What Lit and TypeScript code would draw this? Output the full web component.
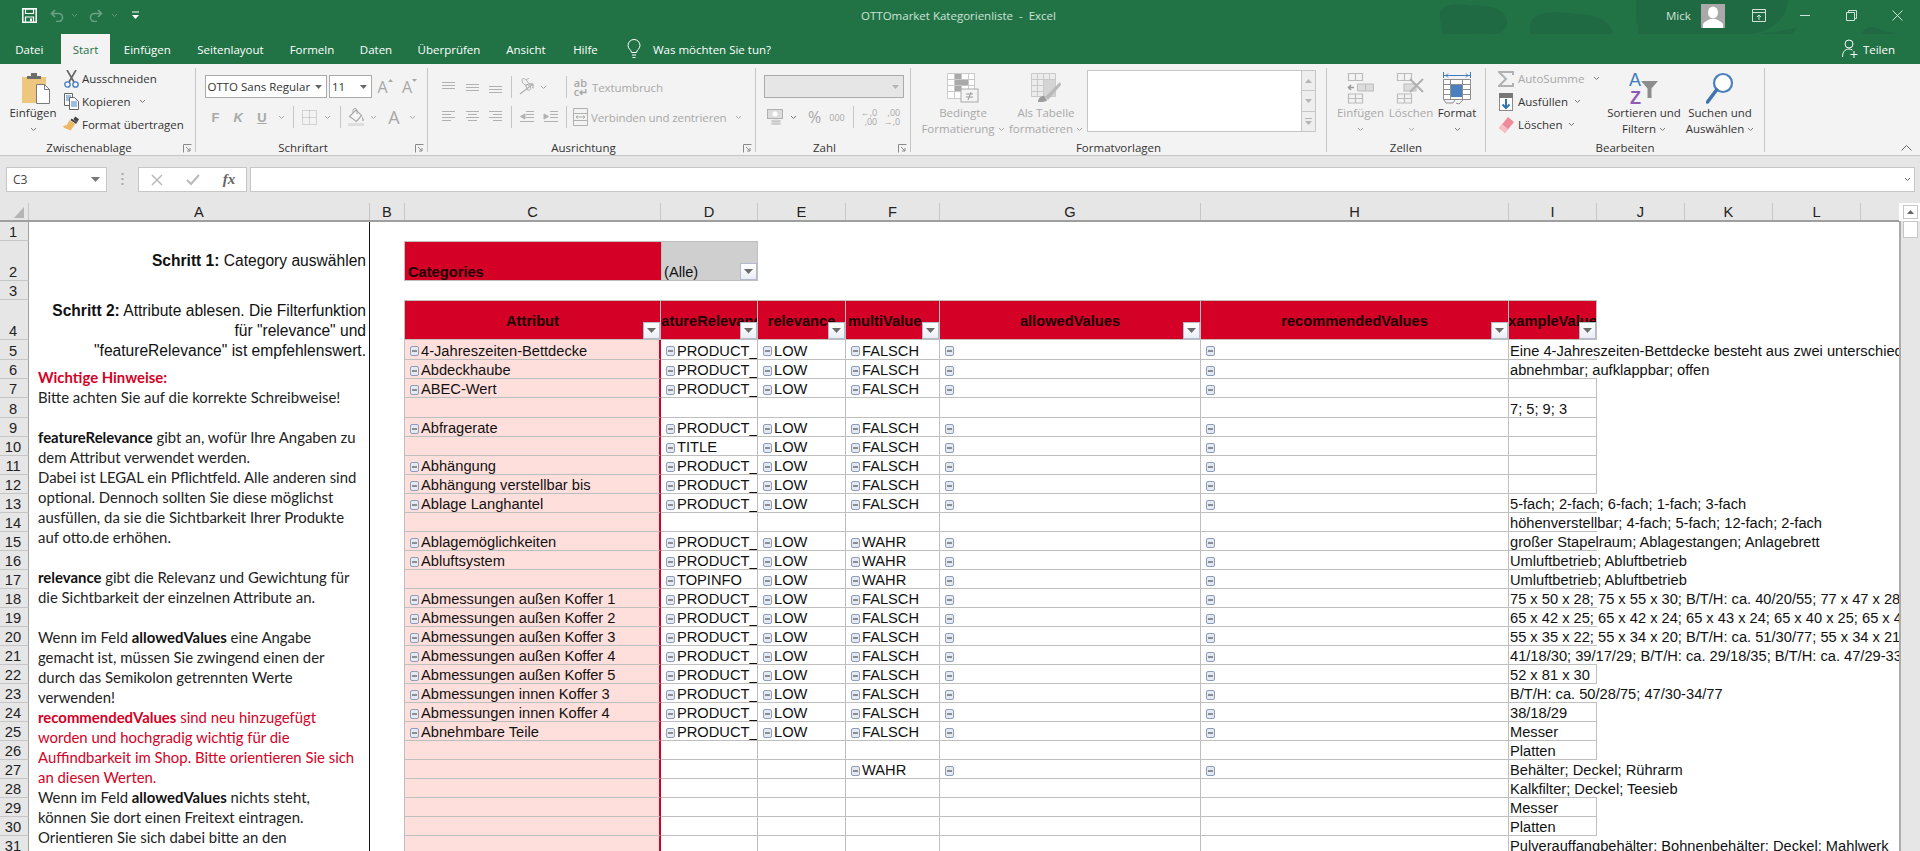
import { LitElement, html, css } from "lit";
import { customElement } from "lit/decorators.js";

interface Row { h: number; a?: string; d?: string; e?: string; f?: string; g?: boolean; i?: string; over?: boolean; }
const P = "PRODUCT_";
const L = "LOW";
const FA = "FALSCH";
const W = "WAHR";
const rows: Row[] = [
  { h: 20, a: "4-Jahreszeiten-Bettdecke", d: P, e: L, f: FA, g: true, i: "Eine 4-Jahreszeiten-Bettdecke besteht aus zwei unterschiedlichen Decken", over: true },
  { h: 19, a: "Abdeckhaube", d: P, e: L, f: FA, g: true, i: "abnehmbar; aufklappbar; offen", over: true },
  { h: 19, a: "ABEC-Wert", d: P, e: L, f: FA, g: true },
  { h: 20, i: "7; 5; 9; 3" },
  { h: 19, a: "Abfragerate", d: P, e: L, f: FA, g: true },
  { h: 19, d: "TITLE", e: L, f: FA, g: true },
  { h: 19, a: "Abhängung", d: P, e: L, f: FA, g: true },
  { h: 19, a: "Abhängung verstellbar bis", d: P, e: L, f: FA, g: true },
  { h: 19, a: "Ablage Langhantel", d: P, e: L, f: FA, g: true, i: "5-fach; 2-fach; 6-fach; 1-fach; 3-fach", over: true },
  { h: 19, i: "höhenverstellbar; 4-fach; 5-fach; 12-fach; 2-fach", over: true },
  { h: 19, a: "Ablagemöglichkeiten", d: P, e: L, f: W, g: true, i: "großer Stapelraum; Ablagestangen; Anlagebrett", over: true },
  { h: 19, a: "Abluftsystem", d: P, e: L, f: W, g: true, i: "Umluftbetrieb; Abluftbetrieb", over: true },
  { h: 19, d: "TOPINFO", e: L, f: W, g: true, i: "Umluftbetrieb; Abluftbetrieb", over: true },
  { h: 19, a: "Abmessungen außen Koffer 1", d: P, e: L, f: FA, g: true, i: "75 x 50 x 28; 75 x 55 x 30; B/T/H: ca. 40/20/55; 77 x 47 x 28", over: true },
  { h: 19, a: "Abmessungen außen Koffer 2", d: P, e: L, f: FA, g: true, i: "65 x 42 x 25; 65 x 42 x 24; 65 x 43 x 24; 65 x 40 x 25; 65 x 41 x 25", over: true },
  { h: 19, a: "Abmessungen außen Koffer 3", d: P, e: L, f: FA, g: true, i: "55 x 35 x 22; 55 x 34 x 20; B/T/H: ca. 51/30/77; 55 x 34 x 21", over: true },
  { h: 19, a: "Abmessungen außen Koffer 4", d: P, e: L, f: FA, g: true, i: "41/18/30; 39/17/29; B/T/H: ca. 29/18/35; B/T/H: ca. 47/29-33/30", over: true },
  { h: 19, a: "Abmessungen außen Koffer 5", d: P, e: L, f: FA, g: true, i: "52 x 81 x 30" },
  { h: 19, a: "Abmessungen innen Koffer 3", d: P, e: L, f: FA, g: true, i: "B/T/H: ca. 50/28/75; 47/30-34/77", over: true },
  { h: 19, a: "Abmessungen innen Koffer 4", d: P, e: L, f: FA, g: true, i: "38/18/29" },
  { h: 19, a: "Abnehmbare Teile", d: P, e: L, f: FA, g: true, i: "Messer" },
  { h: 19, i: "Platten" },
  { h: 19, f: W, g: true, i: "Behälter; Deckel; Rührarm", over: true },
  { h: 19, i: "Kalkfilter; Deckel; Teesieb", over: true },
  { h: 19, i: "Messer" },
  { h: 19, i: "Platten" },
  { h: 19, i: "Pulverauffangbehälter; Bohnenbehälter; Deckel; Mahlwerk", over: true },
];
const topHeights = [19, 40, 19, 40];
const allHeights = [...topHeights, ...rows.map((r) => r.h)];
const colHeads: [string, string][] = [
  ["A", "c-a"], ["B", "c-b"], ["C", "c-cc"], ["D", "c-d"], ["E", "c-e"], ["F", "c-f"],
  ["G", "c-g"], ["H", "c-h"], ["I", "c-i"], ["J", "c-j"], ["K", "c-j"], ["L", "c-j"], ["", "c-m"],
];
const tabNames = ["Datei", "Start", "Einfügen", "Seitenlayout", "Formeln", "Daten", "Überprüfen", "Ansicht", "Hilfe"];

const chev = (c = "#777") => html`<svg class="chev" width="7" height="5" viewBox="0 0 7 5"><path d="M1 1l2.500 2.500L6 1" fill="none" stroke=${c} stroke-width="1"/></svg>`;
const launcher = html`<svg class="launch" width="9" height="9" viewBox="0 0 9 9"><path d="M.5 8.500V.5h8M3 3l4 4M4 7h3V4" fill="none" stroke="#8a8a8a"/></svg>`;
const minus = html`<svg class="mn" width="9" height="10" viewBox="0 0 9 10"><rect x=".5" y=".5" width="8" height="9" rx="1.500" fill="#e4e9f2" stroke="#8d9cb8"/><path d="M2 5h5" stroke="#333" stroke-width="1"/></svg>`;
const filt = html`<span class="filt"><svg width="9" height="5" viewBox="0 0 9 5"><path d="M0 0h9L4.500 5z" fill="#6b6b6b"/></svg></span>`;

const ico = {
  save: html`<svg width="15" height="15" viewBox="0 0 15 15"><path d="M.8.8h13.400v13.400H.8z" fill="none" stroke="#fff" stroke-width="1.500"/><path d="M3.500 1h8v4.500h-8zM3.500 14V9h8v5" fill="none" stroke="#fff" stroke-width="1.200"/><rect x="8" y="10.500" width="2" height="3" fill="#fff"/></svg>`,
  undo: html`<svg width="14" height="13" viewBox="0 0 14 13"><path d="M5 1L1.500 4.500 5 8M2 4.500h6.500a4 4 0 0 1 0 8H6" fill="none" stroke="#6ba284" stroke-width="1.600"/></svg>`,
  redo: html`<svg width="14" height="13" viewBox="0 0 14 13"><path d="M9 1l3.500 3.500L9 8M12 4.500H5.500a4 4 0 0 0 0 8H8" fill="none" stroke="#6ba284" stroke-width="1.600"/></svg>`,
  qat: html`<svg width="7" height="9" viewBox="0 0 7 9"><path d="M0 1h7" stroke="#fff"/><path d="M0 4h7L3.500 8z" fill="#fff"/></svg>`,
  bulb: html`<svg width="14" height="20" viewBox="0 0 14 20"><path d="M4.500 13.500C4.500 11 1 10 1 6.500a6 6 0 0 1 12 0C13 10 9.500 11 9.500 13.500zM5 16h4M5.500 18.500h3" fill="none" stroke="#fff"/></svg>`,
  share: html`<svg width="16" height="20" viewBox="0 0 16 20"><circle cx="7" cy="5" r="4" fill="none" stroke="#fff"/><path d="M.5 18c0-5 2.500-8 6.500-8 1.500 0 2.500.4 3.500 1M12 12v7M8.500 15.500h7" fill="none" stroke="#fff"/></svg>`,
  ribbonDisp: html`<svg width="14" height="13" viewBox="0 0 14 13"><path d="M.5.5h13v12H.5zM.5 3.500h13M7 11V6M5 8l2-2 2 2" fill="none" stroke="#cfe3d8"/></svg>`,
  minw: html`<svg width="10" height="1" viewBox="0 0 10 1"><path d="M0 .5h10" stroke="#cfe3d8"/></svg>`,
  rest: html`<svg width="11" height="11" viewBox="0 0 11 11"><path d="M.5 2.500h8v8h-8zM2.500 2.500v-2h8v8h-2" fill="none" stroke="#cfe3d8"/></svg>`,
  close: html`<svg width="11" height="11" viewBox="0 0 11 11"><path d="M.5.5l10 10M10.500.5l-10 10" stroke="#cfe3d8"/></svg>`,
  avatar: html`<svg width="24" height="24" viewBox="0 0 24 24"><rect width="24" height="24" fill="#a9a9a9"/><ellipse cx="12" cy="8.500" rx="5" ry="6" fill="#fff"/><path d="M2 24v-3c0-3 4-4 7-6h6c3 2 7 3 7 6v3z" fill="#fff"/></svg>`,
  paste: html`<svg class="pasteic" width="28" height="31" viewBox="0 0 28 31"><rect x="0" y="4" width="24" height="26" fill="#eec77e"/><path d="M5 6V3h4V0h6v3h4v3z" fill="#6d6d6d"/><path d="M14.500 11.500h8l5 5v14h-13z" fill="#fff" stroke="#7a7a7a"/><path d="M22.500 11.500v5h5" fill="none" stroke="#7a7a7a"/></svg>`,
  cut: html`<svg width="15" height="18" viewBox="0 0 15 18"><path d="M3 0l7 12M12 0L5 12" stroke="#666" stroke-width="1.700"/><circle cx="3.500" cy="14.500" r="2.700" fill="none" stroke="#3f7cbf" stroke-width="1.300"/><circle cx="11.500" cy="14.500" r="2.700" fill="none" stroke="#3f7cbf" stroke-width="1.300"/></svg>`,
  copy: html`<svg width="15" height="17" viewBox="0 0 15 17"><path d="M.5.5h8v12h-8z" fill="#fff" stroke="#666"/><path d="M2 3h5M2 5h3M2 7h3" stroke="#3f7cbf"/><path d="M5.500 4.500h5l4 4v8h-9z" fill="#fff" stroke="#666"/><path d="M7 9h6M7 11h6M7 13h6" stroke="#3f7cbf"/></svg>`,
  painter: html`<svg width="17" height="17" viewBox="0 0 17 17"><path d="M9 2l6 4-1 2-6-4z" fill="#444"/><path d="M13 0l4 3-2 3-4-3z" fill="#444"/><path d="M7 4l6 4-5 7-7-3-1-2 4-1z" fill="#eeb765"/></svg>`,
  alignT: html`<svg width="15" height="12" viewBox="0 0 15 12"><path d="M1 1.500h13M1 4.500h13M1 7.500h13" stroke="#b1b1b1"/></svg>`,
  alignM: html`<svg width="15" height="12" viewBox="0 0 15 12"><path d="M1 3.500h13M1 6.500h13M1 9.500h13" stroke="#b1b1b1"/></svg>`,
  alignB: html`<svg width="15" height="12" viewBox="0 0 15 12"><path d="M1 5.500h13M1 8.500h13M1 11.500h13" stroke="#b1b1b1"/></svg>`,
  left: html`<svg width="15" height="14" viewBox="0 0 15 14"><path d="M1 1.500h13M1 4.500h9M1 7.500h13M1 10.500h9" stroke="#b1b1b1"/></svg>`,
  center: html`<svg width="15" height="14" viewBox="0 0 15 14"><path d="M1 1.500h13M3 4.500h9M1 7.500h13M3 10.500h9" stroke="#b1b1b1"/></svg>`,
  right: html`<svg width="15" height="14" viewBox="0 0 15 14"><path d="M1 1.500h13M5 4.500h9M1 7.500h13M5 10.500h9" stroke="#b1b1b1"/></svg>`,
  orient: html`<svg width="16" height="18" viewBox="0 0 16 18"><path d="M3 1.500a2.200 2.200 0 0 1 3.500 0L9 4a2.200 2.200 0 0 1-3 3L3.500 4.500zM6.500 7a2.200 2.200 0 0 1 3 0l2 2a2.200 2.200 0 0 1-3 3zM7 2l3-2" fill="none" stroke="#b1b1b1"/><path d="M1 16L14 6M14 6h-4.500M14 6v4.500" fill="none" stroke="#b1b1b1" stroke-width="1.300"/></svg>`,
  outdent: html`<svg width="16" height="14" viewBox="0 0 16 14"><path d="M7 1.500h8M7 4.500h8M7 7.500h8M1 11.500h14M6 4L1.500 6.500 6 9z" fill="#b1b1b1" stroke="#b1b1b1"/></svg>`,
  indent: html`<svg width="16" height="14" viewBox="0 0 16 14"><path d="M7 1.500h8M7 4.500h8M7 7.500h8M1 11.500h14M1 4l4.500 2.500L1 9z" fill="#b1b1b1" stroke="#b1b1b1"/></svg>`,
  merge: html`<svg width="15" height="18" viewBox="0 0 15 18"><path d="M.5.500h14v17H.500zM.5 5.500h14M.5 12.500h14M3 9h9M3 9l2-1.500M3 9l2 1.500M12 9l-2-1.500M12 9l-2 1.500" fill="none" stroke="#b1b1b1"/></svg>`,
  border: html`<svg width="15" height="15" viewBox="0 0 15 15"><path d="M.5.500h14v14H.500zM7.500.5v14M.5 7.500h14" fill="none" stroke="#b1b1b1" stroke-dasharray="1 1"/></svg>`,
  fill: html`<svg width="16" height="18" viewBox="0 0 16 18"><path d="M1.500 8.500L8 2l5.500 5.500-5 6z" fill="#f6f6f6" stroke="#a8a8a8" stroke-width="1.200"/><path d="M5 5V2.500a2 2 0 0 1 4 0V6" fill="none" stroke="#a8a8a8"/><path d="M14 8c1.300 2 2 3 2 4.200a1 1 0 0 1-2 0z" fill="#b8b8b8"/><rect y="15" width="16" height="3" fill="#dedede"/></svg>`,
  money: html`<svg width="16" height="16" viewBox="0 0 16 16"><rect x=".5" y=".5" width="15" height="9" fill="#dcdcdc" stroke="#b1b1b1"/><circle cx="8" cy="5" r="2.500" fill="#fff"/><ellipse cx="9" cy="12" rx="5" ry="1.500" fill="#cfcfcf"/><ellipse cx="9" cy="14.500" rx="5" ry="1.500" fill="#cfcfcf"/></svg>`,
  condfmt: html`<svg width="32" height="30" viewBox="0 0 32 30"><path d="M.5.500h27v25H.500zM7.500.5v25M14.500.5v25M21.500.5v25M.5 6.500h27M.5 12.500h27M.5 18.500h27" fill="#fff" stroke="#c9c9c9"/><rect x="8" y="1" width="6" height="5" fill="#a9a9a9"/><rect x="8" y="7" width="13" height="5" fill="#a9a9a9"/><rect x="8" y="13" width="6" height="5" fill="#a9a9a9"/><rect x="14" y="16" width="17" height="13" fill="#f3f3f3" stroke="#a9a9a9"/><path d="M19 21h7M19 24h7M24 19l-3 8" stroke="#9a9a9a" fill="none"/></svg>`,
  tablefmt: html`<svg width="30" height="30" viewBox="0 0 30 30"><path d="M.5.500h24v23H.500zM6.500.5v23M12.500.5v23M18.500.5v23M.5 6.500h24M.5 12.500h24M.5 18.500h24" fill="#ececec" stroke="#c9c9c9"/><rect x="13" y="7" width="11" height="16" fill="#d4d4d4"/><path d="M29 9L14 24l3 3 13-15z" fill="#b9b9b9"/><path d="M7 29c0-4 3-6 6-6l3 4c-1 2-5 2-9 2z" fill="#9b9b9b"/></svg>`,
  cellIns: html`<svg width="28" height="32" viewBox="0 0 28 32"><path d="M1.500 1.500h14v7h-14zM8.500 1.500v7M1.500 22v9h14v-9zM8.500 22v9M1.500 26.500h14" fill="none" stroke="#bcbcbc" stroke-width="1.200"/><path d="M10.500 12h16v7h-16zM18.500 12v7" fill="#dcdcdc" stroke="#bcbcbc"/><path d="M7 15.500H2M4 13l-2.500 2.500L4 18" fill="none" stroke="#9a9a9a" stroke-width="1.500"/></svg>`,
  cellDel: html`<svg width="30" height="32" viewBox="0 0 30 32"><path d="M1.500 1.500h14v7h-14zM8.500 1.500v7M1.500 22v9h14v-9zM8.500 22v9M1.500 26.500h14" fill="none" stroke="#bcbcbc" stroke-width="1.200"/><rect x="8" y="12" width="12" height="7" fill="#dcdcdc" stroke="#bcbcbc"/><path d="M14 7l13 13M27 7L14 20" stroke="#b0b0b0" stroke-width="2"/></svg>`,
  cellFmt: html`<svg width="28" height="33" viewBox="0 0 28 33"><path d="M1 3.500h26M3 3.500l2-2M3 3.500l2 2M25 3.500l-2-2M25 3.500l-2 2M.5 0v6M27.500 0v6" stroke="#3f7cbf" fill="none"/><path d="M.5 7.500h27v20H.5zM7.500 7.500v20M19.500 7.500v20M.5 12.500h27M.5 17.500h27M.5 22.500h27" fill="#fff" stroke="#8f8f8f"/><rect x="8" y="13" width="11" height="12" fill="#4a80bd"/><path d="M1 28l2 3h7l2-3M13 31l3 1 4-4" fill="none" stroke="#8f8f8f"/></svg>`,
  sigma: html`<svg width="16" height="16" viewBox="0 0 16 16"><path d="M15 4V1H1l7 7-7 7h14v-3" fill="none" stroke="#b1b1b1" stroke-width="2"/></svg>`,
  fillDown: html`<svg width="14" height="18" viewBox="0 0 14 18"><rect x=".5" y=".5" width="13" height="17" fill="#fff" stroke="#8a8a8a"/><rect width="14" height="5" fill="#777"/><path d="M7 6v9M3.500 11.500L7 15l3.500-3.500" fill="none" stroke="#2f75b5" stroke-width="2"/></svg>`,
  eraser: html`<svg width="15" height="16" viewBox="0 0 15 16"><path d="M9 0l6 5-9 11-6-5z" fill="#ef8a9a"/><path d="M0 11l3-4 6 5-3 4z" fill="#f7c0c8"/></svg>`,
  sort: html`<svg width="30" height="34" viewBox="0 0 30 34"><text x="0" y="15" font-family="Liberation Sans" font-size="18" font-weight="400" fill="#3f7cbf">A</text><text x="1" y="33" font-family="Liberation Sans" font-size="18" font-weight="700" fill="#8e5bb5">Z</text><path d="M12 10h17l-6.500 7.500V27h-4v-9.500z" fill="#8d8d8d"/></svg>`,
  find: html`<svg width="28" height="33" viewBox="0 0 28 33"><circle cx="17" cy="11" r="9" fill="#fff" stroke="#4a80bd" stroke-width="2.200"/><path d="M10.500 18L1.500 30" stroke="#3f74b0" stroke-width="3.600" stroke-linecap="round"/></svg>`,
  xm: html`<svg width="12" height="12" viewBox="0 0 12 12"><path d="M1 1l10 10M11 1L1 11" stroke="#b9b9b9" stroke-width="1.500"/></svg>`,
  ck: html`<svg width="14" height="12" viewBox="0 0 14 12"><path d="M1 6l4 4 8-9" fill="none" stroke="#b9b9b9" stroke-width="2"/></svg>`,
};

@customElement("app-root")
export class AppRoot extends LitElement {
  static styles = css`
    :host { display: block; width: 1920px; height: 851px; overflow: hidden; }
    * { box-sizing: border-box; }
    .app { width: 1920px; height: 851px; display: flex; flex-direction: column; overflow: hidden; background: #fff; font-family: "Open Sans", "Noto Sans", sans-serif; font-size: 11.500px; color: #333; }

    .title { position: relative; height: 34px; background: #217346; display: flex; align-items: center; flex: none; padding-left: 21px; padding-bottom: 3px; }
    .deco { position: absolute; right: 0; top: 0; }
    .qat { display: grid; grid-template-columns: 16px 11px 18px 16px 6px 16px 2px 16px 5px 17px; justify-items: center; align-items: center; width: 230px; flex: none; }
    .qat .chev { opacity: .8; }
    .doc { position: relative; flex: 1; text-align: center; color: #cfe3d8; white-space: pre; }
    .win { position: relative; display: flex; align-items: center; color: #cfe3d8; flex: none; }
    .mick { width: 35px; }
    .ava { width: 24px; height: 24px; overflow: hidden; margin-right: 11px; display: flex; }
    .win .b { width: 46px; display: flex; justify-content: center; align-items: center; }

    .tabs { position: relative; height: 30px; background: #217346; color: #fff; display: flex; align-items: stretch; flex: none; padding-left: 2px; }
    .tab { display: flex; align-items: center; justify-content: center; white-space: nowrap; flex: none; }
    .tab.on { background: #f3f3f3; color: #217346; }
    .t0 { width: 54.500px; } .t1 { width: 49px; margin-left: 4.500px; } .t2 { width: 74.600px; } .t3 { width: 91.800px; } .t4 { width: 71.200px; } .t5 { width: 56.800px; } .t6 { width: 89.200px; } .t7 { width: 64.800px; } .t8 { width: 54.200px; }
    .tell { display: flex; align-items: center; gap: 12px; margin-left: 14.400px; }
    .share { margin-left: auto; display: flex; align-items: center; gap: 5px; padding-right: 25px; }

    .ribbon { height: 92px; background: #f3f3f3; border-bottom: 1px solid #c6c6c6; display: flex; flex: none; padding-top: 4px; position: relative; }
    .grp { height: 84px; border-right: 1px solid #c6c6c6; display: flex; flex-direction: column; flex: none; }
    .gb { height: 72px; display: flex; align-items: flex-start; flex: none; }
    .gl { height: 12px; line-height: 16px; display: flex; color: #333; }
    .gl span { text-align: center; white-space: nowrap; flex: none; }
    .launch { margin-left: auto; margin-right: 3px; margin-top: 4px; }
    .g-clip { width: 196px; } .g-clip .gl span { width: 178px; }
    .g-font { width: 232px; } .g-font .gl span { width: 214px; }
    .g-align { width: 328px; } .g-align .gl span { width: 311px; }
    .g-num { width: 155px; } .g-num .gl span { width: 137px; }
    .g-style { width: 416px; } .g-style .gl span { width: 415px; }
    .g-cell { width: 159px; } .g-cell .gl span { width: 158px; }
    .g-edit { width: 279px; } .g-edit .gl span { width: 278px; }
    .collapse { margin-left: auto; margin-right: 8px; margin-top: 77px; }

    .big { display: flex; flex-direction: column; align-items: center; padding-top: 3px; white-space: nowrap; flex: none; line-height: 16px; }
    .bi { height: 34px; display: flex; align-items: center; justify-content: center; }
    .big .tl { height: 16px; display: flex; align-items: center; gap: 3px; }
    .dis { color: #a8a8a8; }
    .small { display: flex; flex-direction: column; flex: none; margin-top: -1px; }
    .sr { height: 23px; display: flex; align-items: center; white-space: nowrap; }
    .si { flex: none; display: flex; justify-content: center; align-items: center; }
    .clip-big { width: 63px; padding-left: 3px; }
    .pasteic { margin-left: 6px; }
    .clip-si { width: 19px; padding-right: 3px; }
    .sr .chev { margin-left: 8px; }
    .edit-small { width: 107px; margin-left: 8px; }
    .edit-si { width: 24px; }
    .edit-small .chev { margin-left: 6px; }
    .edit-small .first .chev { margin-left: 9px; }
    .w-sort { width: 86px; } .w-find { width: 66px; }
    .w-cf { width: 104px; } .w-tf { width: 62px; }
    .w-ci { width: 67px; } .w-cd { width: 34px; } .w-cfm { width: 58px; }

    .stack { display: flex; flex-direction: column; }
    .tg { display: grid; justify-items: center; align-items: center; }
    .sel { height: 23px; border: 1px solid #ababab; background: #fff; display: flex; align-items: center; padding: 0 4px 0 2px; color: #333; white-space: nowrap; }
    .sel svg { margin-left: auto; }
    .sel-font { width: 122px; } .sel-size { width: 43px; }
    .font-stack { margin-left: 8.500px; padding-top: 7px; }
    .font-1 { grid-template-columns: 122px 2.500px 43px 26px 23px; height: 23px; }
    .font-2 { grid-template-columns: 22px 23.500px 24px 14px 11px 20px 16px 10px 21px 14px 28px 8px; height: 24px; margin-top: 7px; }
    .fa { font-weight: 700; color: #a8a8a8; font-family: "Liberation Sans", sans-serif; font-size: 13px; }
    .it { font-style: italic; }
    .un { text-decoration: underline; }
    .big-a { font-family: "Open Sans", sans-serif; font-size: 18px; font-weight: 400; color: #a8a8a8; line-height: 18px; }
    .grow { display: flex; align-items: flex-start; color: #a8a8a8; font-size: 16px; line-height: 18px; }
    .grow svg { margin-top: 1px; }
    .sep { width: 1px; height: 22px; background: #c6c6c6; }
    .align-stack { margin-left: 8px; padding-top: 7px; }
    .al-1 { grid-template-columns: 24px 24px 23px 8px 24px 8px 15px 8px 22px 140px; height: 24px; }
    .al-2 { grid-template-columns: 24px 24px 23px 8px 24px 23px 8px 21px 137px 20px; height: 24px; margin-top: 6px; }
    .tx { justify-self: start; white-space: nowrap; color: #a8a8a8; letter-spacing: -.1px; }
    .ab { font-family: "Open Sans", sans-serif; font-size: 11px; line-height: 9px; color: #a8a8a8; font-weight: 600; }
    .num-stack { margin-left: 8px; padding-top: 7px; }
    .numsel { width: 139.500px; background: #e6e6e6; }
    .num-2 { grid-template-columns: 22px 14px 29px 16px 16px 16px 30px; height: 24px; margin-top: 7px; }
    .pct { font-size: 16px; color: #a8a8a8; }
    .k { font-size: 9px; color: #a8a8a8; }
    .dec { font-size: 9px; line-height: 9px; color: #a8a8a8; text-align: right; white-space: pre; }
    .gal { margin-left: 10px; margin-top: 2px; width: 214px; height: 62px; background: #fff; border: 1px solid #c6c6c6; border-right: none; }
    .galbar { width: 15px; margin-top: 2px; height: 62px; display: flex; flex-direction: column; border: 1px solid #c6c6c6; }
    .galbar div { flex: 1; display: flex; align-items: center; justify-content: center; background: #eee; border-bottom: 1px solid #c6c6c6; }
    .galbar div:last-child { border-bottom: none; }

    .fbar { height: 47px; flex: none; background: #e6e6e6; display: flex; padding: 11px 5px 0 6px; align-items: flex-start; }
    .nb { width: 100.500px; height: 25px; border: 1px solid #c6c6c6; background: #fff; display: flex; align-items: center; padding: 0 6px; font-size: 12px; color: #444; }
    .nb svg { margin-left: auto; }
    .dots { width: 31.500px; display: flex; justify-content: center; padding-top: 6px; }
    .fx { width: 108.500px; height: 25px; border: 1px solid #c6c6c6; background: #fff; display: grid; grid-template-columns: 36px 36px 36px; justify-items: center; align-items: center; padding-left: 0; }
    .fx i { font-family: "Liberation Serif", serif; font-size: 15px; font-weight: 700; color: #666; }
    .fi { flex: 1; margin-left: 3.500px; height: 25px; border: 1px solid #c6c6c6; background: #fff; display: flex; align-items: center; justify-content: flex-end; padding-right: 3px; }

    .sheet { flex: 1; min-height: 0; display: flex; overflow: hidden; font-family: "Liberation Sans", Arial, sans-serif; font-size: 14.670px; color: #111; }
    .main { width: 1899px; flex: none; display: flex; flex-direction: column; overflow: hidden; }
    .vs { flex: 1; background: #e6e6e6; border-left: 2px solid #ababab; margin-top: 18px; display: flex; flex-direction: column; align-items: center; }
    .vsup { width: 15px; height: 14px; background: #fff; border: 1px solid #c6c6c6; margin-top: -16px; display: flex; align-items: center; justify-content: center; flex: none; }
    .vsth { width: 15px; height: 17px; background: #fff; border: 1px solid #c6c6c6; margin-top: 2px; flex: none; }
    .colhead { height: 19px; flex: none; display: flex; background: #e6e6e6; border-bottom: 2px solid #9f9f9f; }
    .corner { width: 29px; border-right: 1px solid #c6c6c6; display: flex; justify-content: flex-end; padding: 4px 4px 0 0; }
    .ch { display: flex; justify-content: center; align-items: center; border-right: 1px solid #c6c6c6; line-height: 16px; height: 17px; color: #222; flex: none; }
    .c-a { width: 341px; } .c-b { width: 35px; } .c-cc { width: 256px; } .c-c { width: 257px; } .c-d { width: 97px; } .c-e { width: 88px; } .c-f { width: 94px; } .c-g { width: 261px; } .c-h { width: 308px; } .c-i, .c-j { width: 88px; } .c-m { width: 38px; border-right: none; }
    .body { flex: 1; min-height: 0; display: flex; overflow: hidden; }
    .rh { width: 29px; flex: none; display: flex; flex-direction: column; background: #e6e6e6; }
    .rn { flex: none; border-bottom: 1px solid #c6c6c6; border-right: 1px solid #9f9f9f; display: flex; align-items: flex-end; justify-content: center; line-height: 15px; color: #222; padding-right: 2px; }
    .cola { width: 341px; flex: none; border-right: 1px solid #111; padding: 0 0 0 9px; overflow: hidden; }
    .step { font-size: 15.600px; text-align: right; padding-right: 3px; line-height: 20px; display: flex; flex-direction: column; justify-content: center; }
    .s1 { margin-top: 19px; height: 40px; }
    .s2 { margin-top: 19px; height: 60px; padding-top: 2px; }
    .note { padding-top: 7px; font-family: Lato, "Liberation Sans", sans-serif; font-size: 14.900px; line-height: 20px; color: #222; width: 330px; }
    .note b { font-weight: 700; color: #111; }
    .red, .red b { color: #d50025; }
    .pad { height: 20px; }
    .b-sp { width: 34px; flex: none; }
    .pv { flex: 1; min-width: 0; display: flex; flex-direction: column; }
    .pv-top { margin-top: 19px; height: 40px; flex: none; display: flex; }
    .cat { width: 257px; background: #d50025; border: 1px solid #bfbfbf; border-right: none; font-weight: 700; display: flex; align-items: flex-end; padding: 0 0 0 3px; line-height: 16px; color: #1a0006; }
    .alle { width: 97px; background: #cfcfcf; border: 1px solid #bfbfbf; display: flex; align-items: flex-end; padding: 0 0 0 2px; line-height: 16px; position: relative; }
    .filt { position: absolute; right: 0; bottom: 0; width: 17px; height: 17px; background: linear-gradient(#fff, #eaeef4); border: 1px solid #b4bacb; display: flex; align-items: center; justify-content: center; }
    .pv-head { margin-top: 19px; height: 40px; flex: none; display: flex; }
    .hc { background: #d50025; border: 1px solid #bfbfbf; border-left: none; font-weight: 700; display: flex; align-items: center; justify-content: center; position: relative; overflow: hidden; white-space: nowrap; color: #1a0006; padding-top: 1px; }
    .hc:first-child { border-left: 1px solid #bfbfbf; }
    .hc.lf { justify-content: flex-start; padding-left: 2px; }
    .rw { display: flex; flex: none; }
    .cl { display: flex; align-items: center; overflow: hidden; white-space: nowrap; border-right: 1px solid #bfbfbf; border-bottom: 1px solid #bfbfbf; padding: 2px 0 0 5px; gap: 2px; flex: none; }
    .cl.c-c { background: #ffdfdc; border-left: 1px solid #bfbfbf; border-right: 2px solid #d50025; padding-left: 5px; }
    .cl.c-i { overflow: visible; padding-left: 1px; }
    .cl.noborder { border-right: none; }
    .mn { flex: none; margin-top: 1px; }
  `;

  render() {
    return html`<div class="app">
      ${this.title_()}
      ${this.tabs()}
      ${this.ribbon()}
      ${this.fbar()}
      <div class="sheet">
        <div class="main">
          <div class="colhead">
            <div class="corner"><svg width="10" height="11" viewBox="0 0 10 11"><path d="M10 0v11H0z" fill="#b5b5b5"/></svg></div>
            ${colHeads.map(([l, c]) => html`<div class="ch ${c}">${l}</div>`)}
          </div>
          <div class="body">
            <div class="rh">${allHeights.map((h, i) => html`<div class="rn" style="height:${h}px">${i + 1}</div>`)}</div>
            ${this.cola()}
            <div class="b-sp"></div>
            ${this.pivot()}
          </div>
        </div>
        <div class="vs">
          <div class="vsup"><svg width="7" height="4" viewBox="0 0 7 4"><path d="M0 4l3.500-4L7 4z" fill="#666"/></svg></div>
          <div class="vsth"></div>
        </div>
      </div>
    </div>`;
  }

  title_() {
    return html`<div class="title">
      <svg class="deco" width="520" height="64" viewBox="0 0 520 64">
        <path d="M40 12C45 3 60 3 70 6c15-2 35 2 37 14 1 10-7 15-17 14-15-1-35 2-50 4 5-6-1-16 0-26z" fill="#1f6a43"/>
        <path d="M130 25c2-13 20-15 45-11 20 0 37 6 38 21 1 7 2 10 0 12-18-3-43 4-63 1-10-2-18-6-25-8 7-2 5-8 5-15z" fill="#1f6a43"/>
        <path d="M236 0h152c0 15-13 32-43 35 20-1 40-5 52-7-7 12-27 17-57 17-30-3-60-9-78-8-12 1-22 5-26 8 2-10 4-17 0-23z" fill="#1f6a43"/>
        <path d="M458 52c0-14 4-25 14-25 8 1 12 5 18 5 8 0 13 4 13 12 0 4-5 8-13 8z" fill="#1f6a43"/>
      </svg>
      <div class="qat">${ico.save}<span></span>${ico.undo}${chev("#6ba284")}<span></span>${ico.redo}<span></span>${chev("#6ba284")}<span></span>${ico.qat}</div>
      <div class="doc">OTTOmarket Kategorienliste  -  Excel</div>
      <div class="win">
        <span class="mick">Mick</span>
        <div class="ava">${ico.avatar}</div>
        <div class="b">${ico.ribbonDisp}</div><div class="b">${ico.minw}</div><div class="b">${ico.rest}</div><div class="b">${ico.close}</div>
      </div>
    </div>`;
  }

  tabs() {
    return html`<div class="tabs">
      ${tabNames.map((t, i) => html`<div class="tab t${i} ${t === "Start" ? "on" : ""}">${t}</div>`)}
      <div class="tell">${ico.bulb}<span>Was möchten Sie tun?</span></div>
      <div class="share">${ico.share}<span>Teilen</span></div>
    </div>`;
  }

  ribbon() {
    const triDn = html`<svg width="7" height="4" viewBox="0 0 7 4"><path d="M0 0h7L3.500 4z" fill="#666"/></svg>`;
    const up = html`<svg width="5" height="3" viewBox="0 0 5 3"><path d="M0 3l2.500-3L5 3z" fill="#a8a8a8"/></svg>`;
    const dn = html`<svg width="5" height="3" viewBox="0 0 5 3"><path d="M0 0h5L2.500 3z" fill="#a8a8a8"/></svg>`;
    return html`<div class="ribbon">
      <div class="grp g-clip">
        <div class="gb">
          <div class="big clip-big"><div class="bi">${ico.paste}</div><div class="tl">Einfügen</div><div class="tl">${chev()}</div></div>
          <div class="small">
            <div class="sr"><span class="si clip-si">${ico.cut}</span>Ausschneiden</div>
            <div class="sr"><span class="si clip-si">${ico.copy}</span>Kopieren ${chev()}</div>
            <div class="sr"><span class="si clip-si">${ico.painter}</span>Format übertragen</div>
          </div>
        </div>
        <div class="gl"><span>Zwischenablage</span>${launcher}</div>
      </div>
      <div class="grp g-font">
        <div class="gb"><div class="stack font-stack">
          <div class="tg font-1">
            <div class="sel sel-font">OTTO Sans Regular ${triDn}</div><span></span>
            <div class="sel sel-size">11 ${triDn}</div>
            <span class="grow">A${up}</span><span class="grow">A${dn}</span>
          </div>
          <div class="tg font-2">
            <span class="fa">F</span><span class="fa it">K</span><span class="fa un">U</span>${chev("#a8a8a8")}<span class="sep"></span>
            ${ico.border}${chev("#a8a8a8")}<span class="sep"></span>${ico.fill}${chev("#a8a8a8")}<span class="big-a">A</span>${chev("#a8a8a8")}
          </div>
        </div></div>
        <div class="gl"><span>Schriftart</span>${launcher}</div>
      </div>
      <div class="grp g-align">
        <div class="gb"><div class="stack align-stack">
          <div class="tg al-1">
            ${ico.alignT}${ico.alignM}${ico.alignB}<span class="sep"></span>${ico.orient}${chev("#a8a8a8")}<span></span><span class="sep"></span>
            <span class="ab">ab<br />c↵</span><span class="tx">Textumbruch</span>
          </div>
          <div class="tg al-2">
            ${ico.left}${ico.center}${ico.right}<span class="sep"></span>${ico.outdent}${ico.indent}<span class="sep"></span>${ico.merge}
            <span class="tx">Verbinden und zentrieren</span>${chev("#a8a8a8")}
          </div>
        </div></div>
        <div class="gl"><span>Ausrichtung</span>${launcher}</div>
      </div>
      <div class="grp g-num">
        <div class="gb"><div class="stack num-stack">
          <div class="sel numsel"><svg width="7" height="4" viewBox="0 0 7 4"><path d="M0 0h7L3.500 4z" fill="#b5b5b5"/></svg></div>
          <div class="tg num-2">
            ${ico.money}${chev()}<span class="pct">%</span><span class="k">000</span><span class="sep"></span>
            <span class="dec">←,0\n,00</span><span class="dec">,00\n→,0</span>
          </div>
        </div></div>
        <div class="gl"><span>Zahl</span>${launcher}</div>
      </div>
      <div class="grp g-style">
        <div class="gb">
          <div class="big w-cf dis"><div class="bi">${ico.condfmt}</div><div class="tl">Bedingte</div><div class="tl">Formatierung ${chev("#a8a8a8")}</div></div>
          <div class="big w-tf dis"><div class="bi">${ico.tablefmt}</div><div class="tl">Als Tabelle</div><div class="tl">formatieren ${chev("#a8a8a8")}</div></div>
          <div class="gal"></div>
          <div class="galbar">
            <div><svg width="7" height="4" viewBox="0 0 7 4"><path d="M0 4l3.500-4L7 4z" fill="#b5b5b5"/></svg></div>
            <div><svg width="7" height="4" viewBox="0 0 7 4"><path d="M0 0h7L3.500 4z" fill="#b5b5b5"/></svg></div>
            <div><svg width="7" height="7" viewBox="0 0 7 7"><path d="M0 .5h7" stroke="#b5b5b5"/><path d="M0 3h7L3.500 7z" fill="#b5b5b5"/></svg></div>
          </div>
        </div>
        <div class="gl"><span>Formatvorlagen</span></div>
      </div>
      <div class="grp g-cell">
        <div class="gb">
          <div class="big w-ci dis"><div class="bi">${ico.cellIns}</div><div class="tl">Einfügen</div><div class="tl">${chev("#a8a8a8")}</div></div>
          <div class="big w-cd dis"><div class="bi">${ico.cellDel}</div><div class="tl">Löschen</div><div class="tl">${chev("#a8a8a8")}</div></div>
          <div class="big w-cfm"><div class="bi">${ico.cellFmt}</div><div class="tl">Format</div><div class="tl">${chev()}</div></div>
        </div>
        <div class="gl"><span>Zellen</span></div>
      </div>
      <div class="grp g-edit">
        <div class="gb">
          <div class="small edit-small">
            <div class="sr first dis"><span class="si edit-si">${ico.sigma}</span>AutoSumme ${chev()}</div>
            <div class="sr"><span class="si edit-si">${ico.fillDown}</span>Ausfüllen ${chev()}</div>
            <div class="sr"><span class="si edit-si">${ico.eraser}</span>Löschen ${chev()}</div>
          </div>
          <div class="big w-sort"><div class="bi">${ico.sort}</div><div class="tl">Sortieren und</div><div class="tl">Filtern ${chev()}</div></div>
          <div class="big w-find"><div class="bi">${ico.find}</div><div class="tl">Suchen und</div><div class="tl">Auswählen ${chev()}</div></div>
        </div>
        <div class="gl"><span>Bearbeiten</span></div>
      </div>
      <svg class="collapse" width="11" height="6" viewBox="0 0 11 6"><path d="M.5 5.500l5-5 5 5" fill="none" stroke="#666"/></svg>
    </div>`;
  }

  fbar() {
    return html`<div class="fbar">
      <div class="nb">C3 <svg width="9" height="5" viewBox="0 0 9 5"><path d="M0 0h9L4.500 5z" fill="#777"/></svg></div>
      <div class="dots"><svg width="3" height="12" viewBox="0 0 3 12"><path d="M1.500 0v2M1.500 5v2M1.500 10v2" stroke="#a8a8a8" stroke-width="2"/></svg></div>
      <div class="fx">${ico.xm}${ico.ck}<i>fx</i></div>
      <div class="fi">${chev("#666")}</div>
    </div>`;
  }

  cola() {
    return html`<div class="cola">
      <div class="step s1"><div><b>Schritt 1:</b> Category auswählen</div></div>
      <div class="step s2"><div><b>Schritt 2:</b> Attribute ablesen. Die Filterfunktion<br />für "relevance" und<br />"featureRelevance" ist empfehlenswert.</div></div>
      <div class="note">
        <div class="red"><b>Wichtige Hinweise:</b></div>
        <div>Bitte achten Sie auf die korrekte Schreibweise!</div>
        <div class="pad"></div>
        <div><b>featureRelevance</b> gibt an, wofür Ihre Angaben zu</div>
        <div>dem Attribut verwendet werden.</div>
        <div>Dabei ist LEGAL ein Pflichtfeld. Alle anderen sind</div>
        <div>optional. Dennoch sollten Sie diese möglichst</div>
        <div>ausfüllen, da sie die Sichtbarkeit Ihrer Produkte</div>
        <div>auf otto.de erhöhen.</div>
        <div class="pad"></div>
        <div><b>relevance</b> gibt die Relevanz und Gewichtung für</div>
        <div>die Sichtbarkeit der einzelnen Attribute an.</div>
        <div class="pad"></div>
        <div>Wenn im Feld <b>allowedValues</b> eine Angabe</div>
        <div>gemacht ist, müssen Sie zwingend einen der</div>
        <div>durch das Semikolon getrennten Werte</div>
        <div>verwenden!</div>
        <div class="red"><b>recommendedValues</b> sind neu hinzugefügt</div>
        <div class="red">worden und hochgradig wichtig für die</div>
        <div class="red">Auffindbarkeit im Shop. Bitte orientieren Sie sich</div>
        <div class="red">an diesen Werten.</div>
        <div>Wenn im Feld <b>allowedValues</b> nichts steht,</div>
        <div>können Sie dort einen Freitext eintragen.</div>
        <div>Orientieren Sie sich dabei bitte an den</div>
      </div>
    </div>`;
  }

  pivot() {
    const heads: [string, string, string][] = [
      ["Attribut", "c-c", ""], ["featureRelevance", "c-d", ""], ["relevance", "c-e", ""], ["multiValue", "c-f", "lf"],
      ["allowedValues", "c-g", ""], ["recommendedValues", "c-h", ""], ["exampleValues", "c-i", ""],
    ];
    const cell = (cls: string, v?: string) => html`<div class="cl ${cls}">${v ? html`${minus}<span>${v}</span>` : ""}</div>`;
    return html`<div class="pv">
      <div class="pv-top">
        <div class="cat">Categories</div>
        <div class="alle">(Alle)${filt}</div>
      </div>
      <div class="pv-head">
        ${heads.map(([t, c, x]) => html`<div class="hc ${c} ${x}"><span>${t}</span>${filt}</div>`)}
      </div>
      ${rows.map((r) => html`<div class="rw" style="height:${r.h}px">
        ${cell("c-c", r.a)}${cell("c-d", r.d)}${cell("c-e", r.e)}${cell("c-f", r.f)}
        <div class="cl c-g">${r.g ? minus : ""}</div>
        <div class="cl c-h">${r.g ? minus : ""}</div>
        <div class="cl c-i ${r.over ? "noborder" : ""}">${r.i ?? ""}</div>
      </div>`)}
    </div>`;
  }
}
